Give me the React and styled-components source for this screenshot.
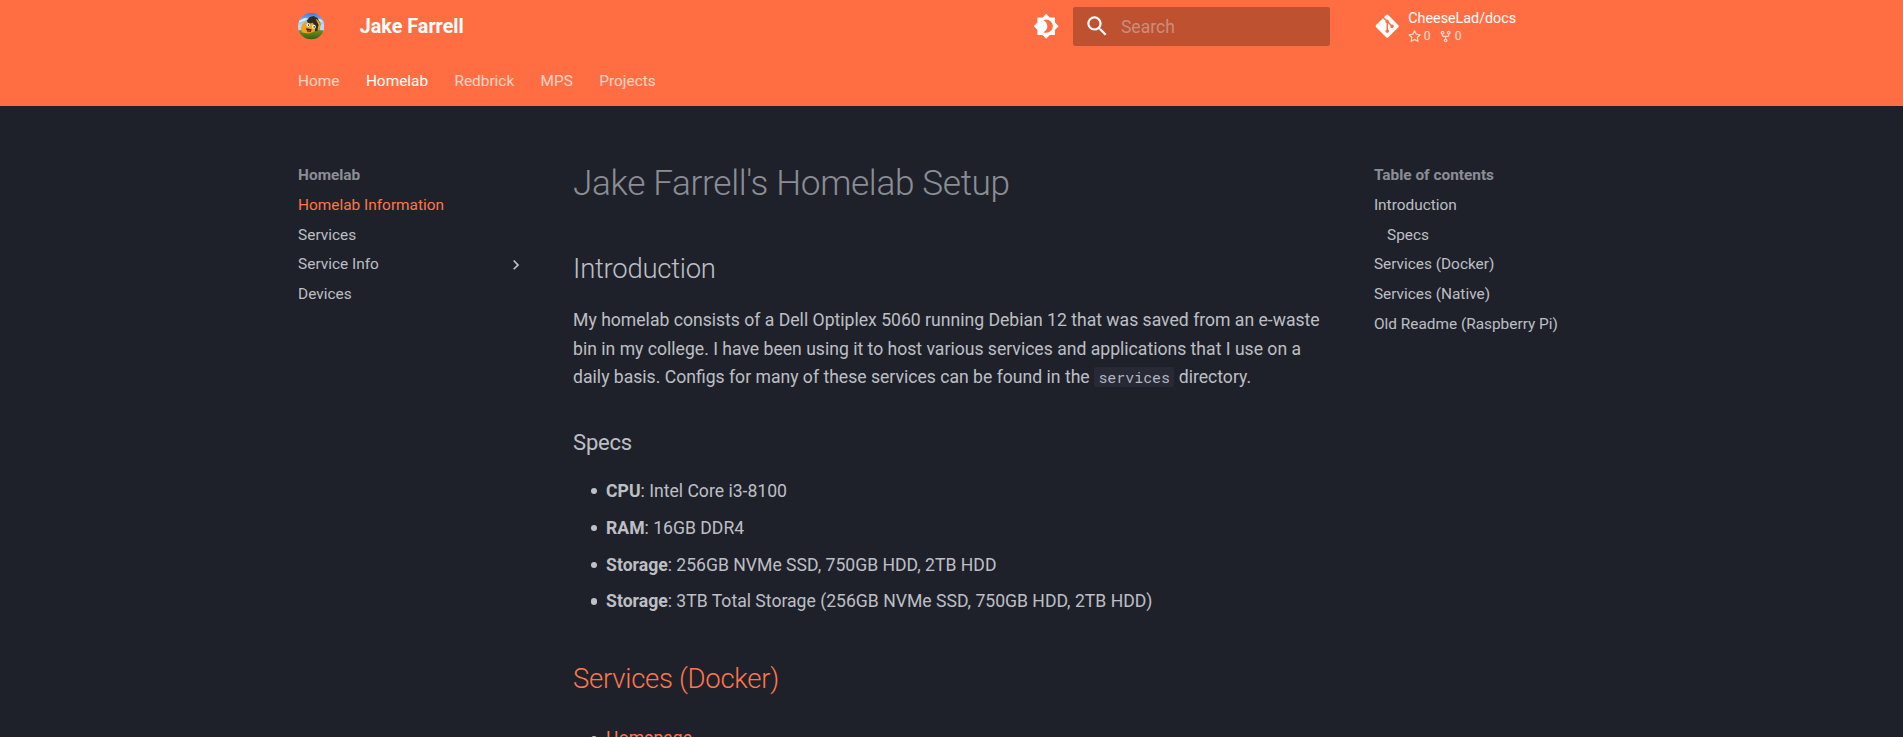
import React from "react";
import styled, { createGlobalStyle } from "styled-components";
import { FaGitAlt } from "react-icons/fa";

const Global = createGlobalStyle`
  html { font-size: 22px; background: #1e2129; }
  body {
    margin: 0;
    height: 737px;
    overflow: hidden;
    background: #1e2129;
    color: hsla(225, 15%, 90%, .82);
    font-family: Roboto, "Liberation Sans", sans-serif;
    font-feature-settings: "kern", "liga";
    -webkit-font-smoothing: antialiased;
  }
  * { box-sizing: border-box; }
  a { color: inherit; text-decoration: none; }
`;

const Page = styled.div`
  height: 737px;
  overflow: hidden;
`;

const Banner = styled.div`
  background: #ff6e42;
  color: #fff;
`;

const Grid = styled.div`
  width: 61rem;
  margin: 0 auto;
`;

const HeaderRow = styled(Grid)`
  display: flex;
  align-items: center;
  height: 2.4rem;
  padding: 0 .2rem;
`;

const HeaderButton = styled.a`
  display: block;
  margin: .2rem;
  padding: .4rem;
  svg { display: block; width: 1.2rem; height: 1.2rem; fill: currentColor; }
`;

const SiteTitle = styled.div`
  flex: 1;
  margin-left: 1rem;
  padding-top: 2px;
  font-size: .9rem;
  font-weight: 700;
  line-height: 2.4rem;
`;

const SearchBox = styled.label`
  display: flex;
  align-items: center;
  gap: .5rem;
  width: 11.7rem;
  height: 1.8rem;
  padding-left: .5rem;
  border-radius: .1rem;
  background: rgba(0, 0, 0, .26);
  font-size: .8rem;
  svg { width: 1.2rem; height: 1.2rem; fill: #fff; }
`;

const Placeholder = styled.span`
  padding-top: 2px;
  color: hsla(225, 15%, 90%, .42);
`;

const Source = styled.a`
  display: flex;
  align-items: center;
  width: 11.7rem;
  height: 2.4rem;
  margin-left: 1.4rem;
  padding-left: .6rem;
  font-size: .65rem;
  line-height: 1.2;
`;

const SourceIcon = styled(FaGitAlt)`
  width: 1.2rem;
  height: 1.2rem;
`;

const Repo = styled.div`
  margin-left: 8px;
  padding-top: .8px;
`;

const Facts = styled.div`
  display: flex;
  gap: .4rem;
  margin-top: 1.6px;
  font-size: .55rem;
  opacity: .75;
`;

const Fact = styled.span`
  display: flex;
  align-items: center;
  gap: .1rem;
  svg { width: .6rem; height: .6rem; fill: currentColor; }
`;

const Tabs = styled(Grid)`
  display: flex;
  height: 2.4rem;
  padding-left: .2rem;
`;

const Tab = styled.a`
  padding: .8rem .6rem 0;
  font-size: .7rem;
  line-height: 1.44;
  opacity: ${(p) => (p.$active ? 1 : 0.7)};
`;

const Main = styled(Grid)`
  display: flex;
  padding-top: 1.5rem;
`;

const Sidebar = styled.nav`
  flex: none;
  width: 12.1rem;
  padding: 26.9px .6rem 1.2rem .8rem;
  font-size: .7rem;
  line-height: 1.3;
`;

const NavTitle = styled.div`
  color: hsla(225, 15%, 90%, .56);
  font-weight: 700;
`;

const NavLink = styled.a`
  display: flex;
  align-items: center;
  justify-content: space-between;
  height: 1.3em;
  margin-top: .625em;
  padding-left: ${(p) => (p.$nested ? ".6rem" : 0)};
  white-space: nowrap;
  color: ${(p) => (p.$active ? "#ff764d" : "inherit")};
  svg { width: .9rem; height: .9rem; margin-right: 8px; fill: currentColor; }
`;

const Article = styled.article`
  flex: 1;
  min-width: 0;
  margin: 0 1.2rem;
  padding-top: 1rem;
  font-size: .8rem;
  line-height: 1.6;
`;

const H1 = styled.h1`
  margin: 0 0 1.25em;
  color: hsla(225, 15%, 90%, .56);
  font-size: 2em;
  font-weight: 300;
  letter-spacing: -.01em;
  line-height: 1.3;
`;

const H2 = styled.h2`
  margin: 1.6em 0 .64em;
  font-size: 1.5625em;
  font-weight: 300;
  letter-spacing: -.01em;
  line-height: 1.4;
`;

const H3 = styled.h3`
  margin: 1.6em 0 .8em;
  font-size: 1.25em;
  font-weight: 400;
  letter-spacing: -.01em;
  line-height: 1.5;
`;

const Link = styled.a`
  && { color: #ff764d; }
`;

const Text = styled.p`
  margin: 1em 0;
`;

const Code = styled.code`
  padding: 0 .2941176471em;
  border-radius: .1rem;
  background: #272a35;
  color: hsla(225, 18%, 86%, .82);
  font-family: "Roboto Mono", "DejaVu Sans Mono", monospace;
  font-size: .85em;
  letter-spacing: -.03px;
`;

const List = styled.ul`
  margin: 1em 0 1em .625em;
  padding: ${(p) => (p.$loose ? ".5em 0 0" : 0)};
  list-style: none;
`;

const Item = styled.li`
  margin: 0 0 .5em 1.25em;
  &::before {
    content: "";
    display: inline-block;
    width: 6.6px;
    height: 6.6px;
    margin: 0 8.6px 0 -15.2px;
    border-radius: 50%;
    background: currentColor;
    vertical-align: 2.4px;
  }
`;

function Avatar() {
  return (
    <svg viewBox="0 0 27 27">
      <defs>
        <clipPath id="disc"><circle cx="13.5" cy="13.5" r="13.5" /></clipPath>
        <linearGradient id="sky" x1="0" y1="0" x2="0" y2="1">
          <stop offset="0" stopColor="#3b79d6" />
          <stop offset=".6" stopColor="#b9d6f2" />
        </linearGradient>
        <linearGradient id="grass" x1="0" y1="0" x2="0" y2="1">
          <stop offset="0" stopColor="#6d9626" />
          <stop offset="1" stopColor="#3b5c0d" />
        </linearGradient>
      </defs>
      <g clipPath="url(#disc)">
        <path fill="url(#sky)" d="M0 0h27v20H0z" />
        <path fill="#dceaf8" d="M1 8l6-3 4 1-4 2-6 2zM19 5l5 2 2 3-5-2z" />
        <path fill="url(#grass)" d="M0 18q12-2 27 0v9H0z" />
        <path fill="#2e2b25" d="M9 8l3-4 4-1 4 2 3 6-1 6-4 2-3-7-5-2z" />
        <path fill="#e9a51b" d="M4 12l4-3 4 2 3-1 3 4-1 5-6 2-7-1-1-4zM18 6q5 2 5 8l-2 4-1-1 1-5z" />
        <circle cx="10.5" cy="12.3" r="1.8" fill="#fff" />
        <circle cx="16.3" cy="14" r="1.9" fill="#fff" />
        <circle cx="10.8" cy="12.4" r=".8" fill="#222" />
        <circle cx="16.5" cy="14.2" r=".8" fill="#222" />
        <path fill="#4b1710" d="M8 15.5l6 1-1 3-3 .3z" />
        <path fill="#dc3027" d="M9.5 17.5l3.2.1-.7 1.7-1.5.1z" />
      </g>
    </svg>
  );
}

const icons = {
  theme: "M12 18c-.89 0-1.74-.2-2.5-.55C11.56 16.5 13 14.42 13 12s-1.44-4.5-3.5-5.45C10.26 6.2 11.11 6 12 6a6 6 0 0 1 6 6 6 6 0 0 1-6 6m8-9.31V4h-4.69L12 .69 8.69 4H4v4.69L.69 12 4 15.31V20h4.69L12 23.31 15.31 20H20v-4.69L23.31 12 20 8.69Z",
  search: "M9.5 3A6.5 6.5 0 0 1 16 9.5c0 1.61-.59 3.09-1.56 4.23l.27.27h.79l5 5-1.5 1.5-5-5v-.79l-.27-.27A6.52 6.52 0 0 1 9.5 16 6.5 6.5 0 0 1 3 9.5 6.5 6.5 0 0 1 9.5 3m0 2C7 5 5 7 5 9.5S7 14 9.5 14 14 12 14 9.5 12 5 9.5 5Z",
  chevron: "M8.59 16.58 13.17 12 8.59 7.41 10 6l6 6-6 6-1.41-1.42Z",
  star: "M8 .25a.75.75 0 0 1 .673.418l1.882 3.815 4.21.612a.75.75 0 0 1 .416 1.279l-3.046 2.97.719 4.192a.751.751 0 0 1-1.088.791L8 12.347l-3.766 1.98a.75.75 0 0 1-1.088-.79l.72-4.194L.818 6.374a.75.75 0 0 1 .416-1.28l4.21-.611L7.327.668A.75.75 0 0 1 8 .25Zm0 2.445L6.615 5.5a.75.75 0 0 1-.564.41l-3.097.45 2.24 2.184a.75.75 0 0 1 .216.664l-.528 3.084 2.769-1.456a.75.75 0 0 1 .698 0l2.77 1.456-.53-3.084a.75.75 0 0 1 .216-.664l2.24-2.183-3.096-.45a.75.75 0 0 1-.564-.41L8 2.694Z",
  fork: "M5 5.372v.878c0 .414.336.75.75.75h4.5a.75.75 0 0 0 .75-.75v-.878a2.25 2.25 0 1 1 1.5 0v.878a2.25 2.25 0 0 1-2.25 2.25h-1.5v2.128a2.251 2.251 0 1 1-1.5 0V8.5h-1.5A2.25 2.25 0 0 1 3.5 6.25v-.878a2.25 2.25 0 1 1 1.5 0ZM5 3.25a.75.75 0 1 0-1.5 0 .75.75 0 0 0 1.5 0Zm6.75.75a.75.75 0 1 0 0-1.5.75.75 0 0 0 0 1.5Zm-3 8.75a.75.75 0 1 0-1.5 0 .75.75 0 0 0 1.5 0Z",
};

const Icon = ({ name, box = 24 }) => (
  <svg viewBox={`0 0 ${box} ${box}`}><path d={icons[name]} /></svg>
);

const specs = [
  ["CPU", "Intel Core i3-8100"],
  ["RAM", "16GB DDR4"],
  ["Storage", "256GB NVMe SSD, 750GB HDD, 2TB HDD"],
  ["Storage", "3TB Total Storage (256GB NVMe SSD, 750GB HDD, 2TB HDD)"],
];

export default function App() {
  return (
    <Page>
      <Global />
      <Banner>
        <HeaderRow as="header">
          <HeaderButton><Avatar /></HeaderButton>
          <SiteTitle>Jake Farrell</SiteTitle>
          <HeaderButton><Icon name="theme" /></HeaderButton>
          <SearchBox>
            <Icon name="search" />
            <Placeholder>Search</Placeholder>
          </SearchBox>
          <Source>
            <SourceIcon />
            <Repo>
              CheeseLad/docs
              <Facts>
                <Fact><Icon name="star" box={16} />0</Fact>
                <Fact><Icon name="fork" box={16} />0</Fact>
              </Facts>
            </Repo>
          </Source>
        </HeaderRow>
        <Tabs as="nav">
          {["Home", "Homelab", "Redbrick", "MPS", "Projects"].map((t) => (
            <Tab key={t} $active={t === "Homelab"}>{t}</Tab>
          ))}
        </Tabs>
      </Banner>
      <Main as="main">
        <Sidebar>
          <NavTitle>Homelab</NavTitle>
          <NavLink $active>Homelab Information</NavLink>
          <NavLink>Services</NavLink>
          <NavLink>Service Info<Icon name="chevron" /></NavLink>
          <NavLink>Devices</NavLink>
        </Sidebar>
        <Article>
          <H1>Jake Farrell's Homelab Setup</H1>
          <H2>Introduction</H2>
          <Text>
            My homelab consists of a Dell Optiplex 5060 running Debian 12 that was saved from an e-waste
            bin in my college. I have been using it to host various services and applications that I use on a
            daily basis. Configs for many of these services can be found in the <Code>services</Code> directory.
          </Text>
          <H3>Specs</H3>
          <List>
            {specs.map(([k, v]) => (
              <Item key={v}><strong>{k}</strong>: {v}</Item>
            ))}
          </List>
          <H2><Link>Services (Docker)</Link></H2>
          <List $loose>
            <Item><Link>Homepage</Link></Item>
          </List>
        </Article>
        <Sidebar>
          <NavTitle>Table of contents</NavTitle>
          <NavLink>Introduction</NavLink>
          <NavLink $nested>Specs</NavLink>
          <NavLink>Services (Docker)</NavLink>
          <NavLink>Services (Native)</NavLink>
          <NavLink>Old Readme (Raspberry Pi)</NavLink>
        </Sidebar>
      </Main>
    </Page>
  );
}
